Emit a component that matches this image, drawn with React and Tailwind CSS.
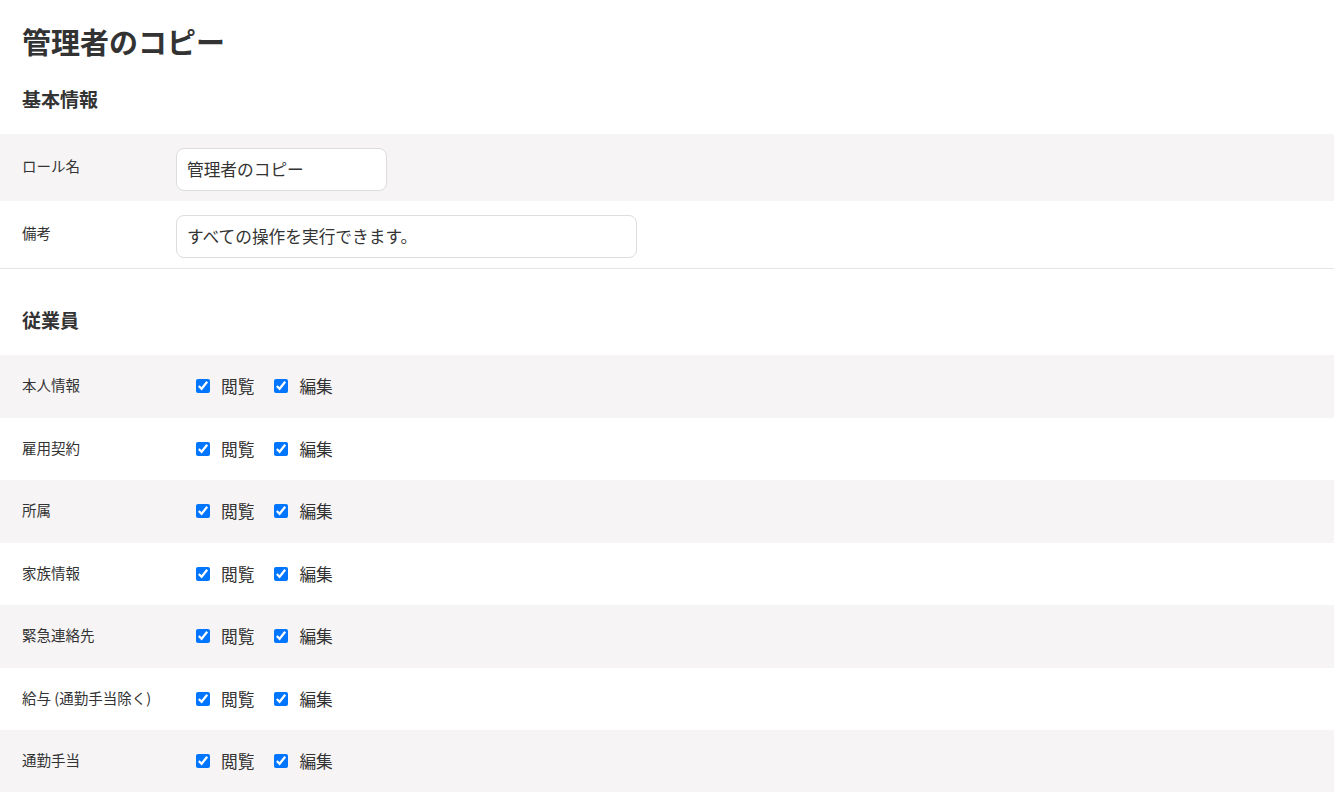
import React from "react";

const rows = [
  "本人情報",
  "雇用契約",
  "所属",
  "家族情報",
  "緊急連絡先",
  "給与 (通勤手当除く)",
  "通勤手当",
];

function Check({ label, className = "" }) {
  return (
    <label className={"flex items-center " + className}>
      <input
        type="checkbox"
        defaultChecked
        className="w-[14px] h-[14px] accent-[#0075ff]"
      />
      <span className="ml-[11px] text-[16.7px] leading-[24px]">{label}</span>
    </label>
  );
}

export default function App() {
  const font = { fontFamily: '"Noto Sans CJK JP", "Noto Sans", sans-serif' };
  return (
    <div className="min-h-[792px] bg-white text-[#333333]" style={font}>
      <h1 className="pt-[21px] px-[22px] text-[29px] leading-[40px] font-bold">
        管理者のコピー
      </h1>
      <h2 className="mt-[24px] px-[22px] text-[19px] leading-[28px] font-bold">
        基本情報
      </h2>
      <div className="mt-[21px] border-b border-[#e5e5e5]">
        <div className="flex h-[67px] bg-[#f6f4f5] px-[22px]">
          <div className="w-[154px] self-center text-[14.5px] leading-[20px] -mt-[3px]">
            ロール名
          </div>
          <div className="pt-[14px]">
            <div className="w-[211px] h-[43px] rounded-lg border border-[#dddddd] bg-white px-[10px] flex items-center text-[16.7px]">
              管理者のコピー
            </div>
          </div>
        </div>
        <div className="flex h-[67px] bg-white px-[22px]">
          <div className="w-[154px] self-center text-[14.5px] leading-[20px] -mt-[3px]">
            備考
          </div>
          <div className="pt-[14px]">
            <div className="w-[461px] h-[43px] rounded-lg border border-[#dddddd] bg-white px-[10px] flex items-center text-[16.7px]">
              すべての操作を実行できます。
            </div>
          </div>
        </div>
      </div>
      <h2 className="mt-[37px] px-[22px] text-[19px] leading-[28px] font-bold">
        従業員
      </h2>
      <div className="mt-[21px]">
        {rows.map((r, i) => (
          <div
            key={r}
            className={
              "flex items-center h-[62.5px] px-[22px] " +
              (i % 2 === 0 ? "bg-[#f6f4f5]" : "bg-white")
            }
          >
            <div className="w-[154px] text-[14.5px] leading-[20px] -mt-[2px]">{r}</div>
            <div className="flex items-center pl-[20px]">
              <Check label="閲覧" />
              <Check label="編集" className="ml-[20px]" />
            </div>
          </div>
        ))}
      </div>
    </div>
  );
}
